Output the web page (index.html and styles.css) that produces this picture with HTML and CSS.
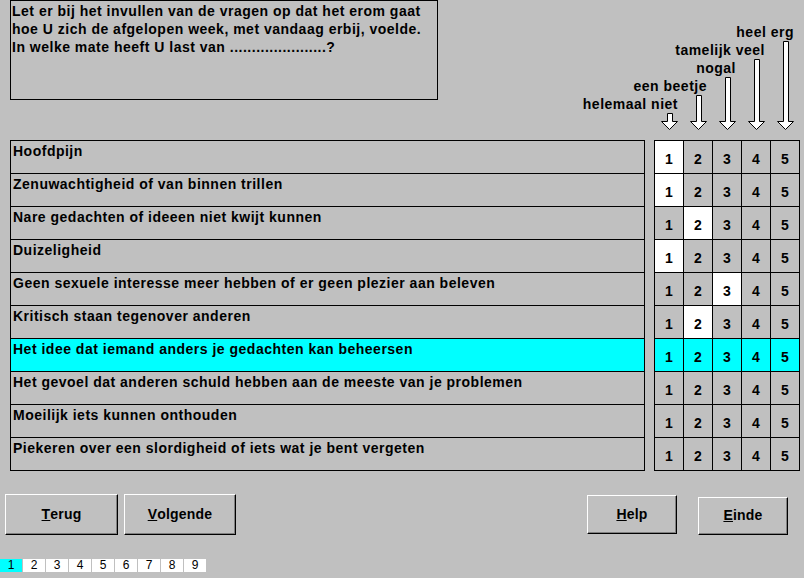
FILE: index.html
```html
<!DOCTYPE html>
<html lang="nl">
<head>
<meta charset="utf-8">
<title>Vragenlijst</title>
<link rel="stylesheet" href="styles.css">
</head>
<body>
<div class="screen">
  <div class="top">
    <div class="intro">Let er bij het invullen van de vragen op dat het erom gaat<br>hoe U zich de afgelopen week, met vandaag erbij, voelde.<br>In welke mate heeft U last van ......................?</div>
    <div class="scale">
      <div class="scale-col">
        <span class="scale-label">helemaal niet</span>
        <svg class="arrow" width="17" height="17" viewBox="0 0 17 17"><polygon points="6.5,0.5 11.5,0.5 11.5,8.5 16.5,8.5 8.5,16.5 0.5,8.5 6.5,8.5"/></svg>
      </div>
      <div class="scale-col">
        <span class="scale-label">een beetje</span>
        <svg class="arrow" width="17" height="35" viewBox="0 0 17 35"><polygon points="6.5,0.5 11.5,0.5 11.5,26.5 16.5,26.5 8.5,34.5 0.5,26.5 6.5,26.5"/></svg>
      </div>
      <div class="scale-col">
        <span class="scale-label">nogal</span>
        <svg class="arrow" width="17" height="53" viewBox="0 0 17 53"><polygon points="6.5,0.5 11.5,0.5 11.5,44.5 16.5,44.5 8.5,52.5 0.5,44.5 6.5,44.5"/></svg>
      </div>
      <div class="scale-col">
        <span class="scale-label">tamelijk veel</span>
        <svg class="arrow" width="17" height="71" viewBox="0 0 17 71"><polygon points="6.5,0.5 11.5,0.5 11.5,62.5 16.5,62.5 8.5,70.5 0.5,62.5 6.5,62.5"/></svg>
      </div>
      <div class="scale-col">
        <span class="scale-label">heel erg</span>
        <svg class="arrow" width="17" height="89" viewBox="0 0 17 89"><polygon points="6.5,0.5 11.5,0.5 11.5,80.5 16.5,80.5 8.5,88.5 0.5,80.5 6.5,80.5"/></svg>
      </div>
    </div>
  </div>

  <div class="main">
    <div class="questions">
      <div class="q">Hoofdpijn</div>
      <div class="q">Zenuwachtigheid of van binnen trillen</div>
      <div class="q">Nare gedachten of ideeen niet kwijt kunnen</div>
      <div class="q">Duizeligheid</div>
      <div class="q">Geen sexuele interesse meer hebben of er geen plezier aan beleven</div>
      <div class="q">Kritisch staan tegenover anderen</div>
      <div class="q active">Het idee dat iemand anders je gedachten kan beheersen</div>
      <div class="q">Het gevoel dat anderen schuld hebben aan de meeste van je problemen</div>
      <div class="q">Moeilijk iets kunnen onthouden</div>
      <div class="q">Piekeren over een slordigheid of iets wat je bent vergeten</div>
    </div>
    <div class="answers">
      <div class="a sel">1</div><div class="a">2</div><div class="a">3</div><div class="a">4</div><div class="a">5</div>
      <div class="a sel">1</div><div class="a">2</div><div class="a">3</div><div class="a">4</div><div class="a">5</div>
      <div class="a">1</div><div class="a sel">2</div><div class="a">3</div><div class="a">4</div><div class="a">5</div>
      <div class="a sel">1</div><div class="a">2</div><div class="a">3</div><div class="a">4</div><div class="a">5</div>
      <div class="a">1</div><div class="a">2</div><div class="a sel">3</div><div class="a">4</div><div class="a">5</div>
      <div class="a">1</div><div class="a sel">2</div><div class="a">3</div><div class="a">4</div><div class="a">5</div>
      <div class="a active">1</div><div class="a active">2</div><div class="a active">3</div><div class="a active">4</div><div class="a active">5</div>
      <div class="a">1</div><div class="a">2</div><div class="a">3</div><div class="a">4</div><div class="a">5</div>
      <div class="a">1</div><div class="a">2</div><div class="a">3</div><div class="a">4</div><div class="a">5</div>
      <div class="a">1</div><div class="a">2</div><div class="a">3</div><div class="a">4</div><div class="a">5</div>
    </div>
  </div>

  <div class="buttons">
    <div class="btn btn-terug"><span class="key">T</span>erug</div>
    <div class="btn btn-volgende"><span class="key">V</span>olgende</div>
    <div class="btn btn-help"><span class="key">H</span>elp</div>
    <div class="btn btn-einde"><span class="key">E</span>inde</div>
  </div>

  <div class="tabs">
    <div class="tab current">1</div>
    <div class="tab">2</div>
    <div class="tab">3</div>
    <div class="tab">4</div>
    <div class="tab">5</div>
    <div class="tab">6</div>
    <div class="tab">7</div>
    <div class="tab">8</div>
    <div class="tab">9</div>
  </div>
</div>
</body>
</html>
```
FILE: styles.css
```css
html, body {
  margin: 0;
  padding: 0;
  background: #c0c0c0;
}

.screen {
  width: 804px;
  height: 578px;
  overflow: hidden;
  font-family: "Liberation Sans", Arial, sans-serif;
  font-weight: bold;
  font-size: 14px;
  letter-spacing: 0.5px;
  color: #000;
}

.top {
  display: flex;
  align-items: flex-start;
  height: 140px;
}

.intro {
  box-sizing: border-box;
  margin-left: 10px;
  width: 428px;
  height: 100px;
  border: 1px solid #000;
  padding: 1px 0 0 1px;
  line-height: 18px;
}

.scale {
  box-sizing: border-box;
  margin-left: auto;
  margin-right: 4px;
  width: 146px;
  height: 140px;
  padding: 0 1px 10px 1px;
  display: flex;
  gap: 1px;
  align-items: flex-end;
}

.scale-col {
  width: 28px;
  display: flex;
  flex-direction: column;
  align-items: center;
}

.scale-label {
  align-self: flex-end;
  margin-right: 5px;
  margin-bottom: 1px;
  white-space: nowrap;
  line-height: 16px;
}

.arrow {
  display: block;
}

.arrow polygon {
  fill: #fff;
  stroke: #000;
  stroke-width: 1;
}

.main {
  display: flex;
  align-items: flex-start;
}

.questions {
  margin-left: 10px;
  width: 635px;
  box-sizing: border-box;
  border: 1px solid #000;
  background: #000;
  display: flex;
  flex-direction: column;
  gap: 1px;
}

.q {
  height: 32px;
  background: #c0c0c0;
  padding: 1px 0 0 2px;
  box-sizing: border-box;
  line-height: 18px;
  white-space: nowrap;
}

.q.active {
  background: #00ffff;
}

.answers {
  margin-left: 9px;
  border: 1px solid #000;
  background: #000;
  display: grid;
  grid-template-columns: repeat(5, 28px);
  grid-auto-rows: 32px;
  gap: 1px;
  letter-spacing: 0;
}

.a {
  background: #c0c0c0;
  display: flex;
  align-items: center;
  justify-content: center;
  padding-top: 3px;
  box-sizing: border-box;
}

.a.sel {
  background: #fff;
}

.a.active {
  background: #00ffff;
}

.buttons {
  display: flex;
  align-items: flex-start;
  margin-top: 23px;
  padding-left: 5px;
  height: 65px;
}

.btn {
  box-sizing: border-box;
  height: 41px;
  border-style: solid;
  border-width: 1px;
  border-color: #fff #000 #000 #fff;
  box-shadow: inset -1px -1px 0 #808080;
  display: flex;
  align-items: center;
  justify-content: center;
  padding-bottom: 2px;
  letter-spacing: 0.2px;
}

.key {
  text-decoration: underline;
}

.btn-terug {
  width: 113px;
}

.btn-volgende {
  width: 112px;
  margin-left: 6px;
}

.btn-help {
  width: 90px;
  height: 39px;
  margin-left: auto;
  margin-top: 1px;
}

.btn-einde {
  width: 90px;
  height: 38px;
  margin-left: 21px;
  margin-right: 16px;
  margin-top: 3px;
}

.tabs {
  display: flex;
  gap: 1px;
}

.tab {
  width: 22px;
  height: 13px;
  background: #fff;
  font-weight: normal;
  font-size: 12px;
  letter-spacing: 0;
  line-height: 13px;
  text-align: center;
}

.tab.current {
  background: #00ffff;
}
```
